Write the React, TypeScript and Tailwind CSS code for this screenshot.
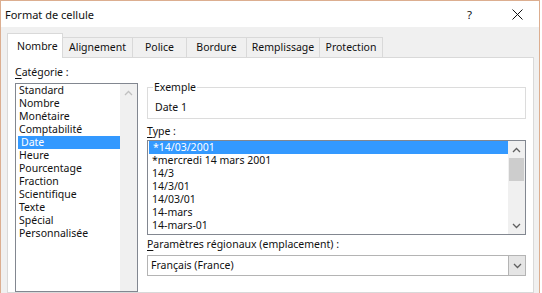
import React from "react";

const categories = [
  "Standard",
  "Nombre",
  "Monétaire",
  "Comptabilité",
  "Date",
  "Heure",
  "Pourcentage",
  "Fraction",
  "Scientifique",
  "Texte",
  "Spécial",
  "Personnalisée",
];

const types = [
  "*14/03/2001",
  "*mercredi 14 mars 2001",
  "14/3",
  "14/3/01",
  "14/03/01",
  "14-mars",
  "14-mars-01",
];

const tabs = [
  { label: "Alignement", w: "w-[70px]" },
  { label: "Police", w: "w-[54px]" },
  { label: "Bordure", w: "w-[60px]" },
  { label: "Remplissage", w: "w-[73px]" },
  { label: "Protection", w: "w-[63px]" },
];

const ChevronUp = ({ color }: { color: string }) => (
  <svg width="9" height="6" viewBox="0 0 9 6" fill="none">
    <path d="M1 5 L4.5 1.5 L8 5" stroke={color} strokeWidth="1.3" />
  </svg>
);

const ChevronDown = ({ color }: { color: string }) => (
  <svg width="9" height="6" viewBox="0 0 9 6" fill="none">
    <path d="M1 1 L4.5 4.5 L8 1" stroke={color} strokeWidth="1.3" />
  </svg>
);

export default function App() {
  return (
    <div className="w-[542px] h-[293px] bg-white overflow-hidden font-['Noto_Sans',sans-serif] text-[10.5px] text-[#111]">
      <div className="w-[540px] h-[293px] flex flex-col border-l border-t border-r border-[#dcae90]">
        {/* Title bar */}
        <div className="h-[26px] shrink-0 bg-white flex items-center pl-[4px]">
          <span className="text-[11px] leading-[15px]">Format de cellule</span>
          <span className="ml-auto text-[11.5px] leading-[15px] mr-[40px]">?</span>
          <svg width="11" height="11" viewBox="0 0 11 11" className="mr-[16px]">
            <path d="M0.5 0.5 L10.5 10.5 M10.5 0.5 L0.5 10.5" stroke="#111" strokeWidth="1" />
          </svg>
        </div>

        {/* Body */}
        <div className="flex-1 bg-[#f0f0f0] pt-[6px] pl-[6px] pr-[5px] flex flex-col min-h-0">
          {/* Tabs */}
          <div className="h-[24px] shrink-0 flex items-end relative z-10">
            <div className="w-[56px] h-[25px] -mb-px bg-white border-l border-t border-r border-[#d9d9d9] flex items-center pl-[9px] leading-[15px]">
              Nombre
            </div>
            {tabs.map((t) => (
              <div
                key={t.label}
                className={`${t.w} h-[20px] border-t border-r border-[#d9d9d9] flex items-center justify-center leading-[15px]`}
              >
                {t.label}
              </div>
            ))}
          </div>

          {/* Panel */}
          <div className="flex-1 bg-white border border-[#d9d9d9] pt-[7px] pl-[7px] flex min-h-0">
            {/* Category column */}
            <div className="w-[123px] shrink-0 flex flex-col">
              <div className="h-[15px] leading-[15px]">
                <span className="underline underline-offset-2">C</span>atégorie :
              </div>
              <div className="mt-[3px] h-[220px] border border-[#828790] flex">
                <div className="flex-1 flex flex-col">
                  {categories.map((c) => (
                    <div
                      key={c}
                      className={`h-[13px] leading-[13px] pl-[3px] ${
                        c === "Date" ? "bg-[#3399ff] text-white ml-[2px] pl-[1px]" : ""
                      }`}
                    >
                      {c}
                    </div>
                  ))}
                </div>
                <div className="w-[17px] bg-[#f0f0f0] flex flex-col items-center pt-[6px]">
                  <ChevronUp color="#c0c0c0" />
                </div>
              </div>
            </div>

            {/* Right column */}
            <div className="ml-[9px] w-[379px] shrink-0 flex flex-col">
              <div className="mt-[22px] h-[32px] border border-[#dcdcdc] relative pl-[7px] pt-[12px]">
                <span className="absolute -top-[8px] left-[5px] bg-white px-[1px] leading-[15px]">
                  Exemple
                </span>
                <div className="leading-[15px]">Date 1</div>
              </div>

              <div className="mt-[5px] h-[15px] leading-[15px]">
                <span className="underline underline-offset-2">T</span>ype :
              </div>
              <div className="mt-[1px] h-[95px] border border-[#828790] flex">
                <div className="flex-1 flex flex-col">
                  {types.map((t, i) => (
                    <div
                      key={t}
                      className={`h-[13px] leading-[13px] pl-[4px] ${
                        i === 0 ? "bg-[#3399ff] text-white ml-[1px] pl-[3px]" : ""
                      }`}
                    >
                      {t}
                    </div>
                  ))}
                </div>
                <div className="w-[17px] bg-[#f0f0f0] flex flex-col items-center">
                  <div className="h-[17px] flex items-center justify-center">
                    <ChevronUp color="#606060" />
                  </div>
                  <div className="w-[15px] h-[23px] bg-[#cdcdcd]" />
                  <div className="flex-1" />
                  <div className="h-[17px] flex items-center justify-center">
                    <ChevronDown color="#606060" />
                  </div>
                </div>
              </div>

              <div className="mt-[2px] h-[15px] leading-[15px]">
                <span className="underline underline-offset-2">P</span>aramètres régionaux (emplacement) :
              </div>
              <div className="mt-[3px] h-[21px] border border-[#b4b4b4] flex items-center">
                <span className="pl-[3px] leading-[15px] flex-1">Français (France)</span>
                <div className="w-[17px] h-full bg-[#e5e5e5] border-l border-[#b4b4b4] flex items-center justify-center">
                  <ChevronDown color="#606060" />
                </div>
              </div>
            </div>
          </div>
        </div>
      </div>
    </div>
  );
}
